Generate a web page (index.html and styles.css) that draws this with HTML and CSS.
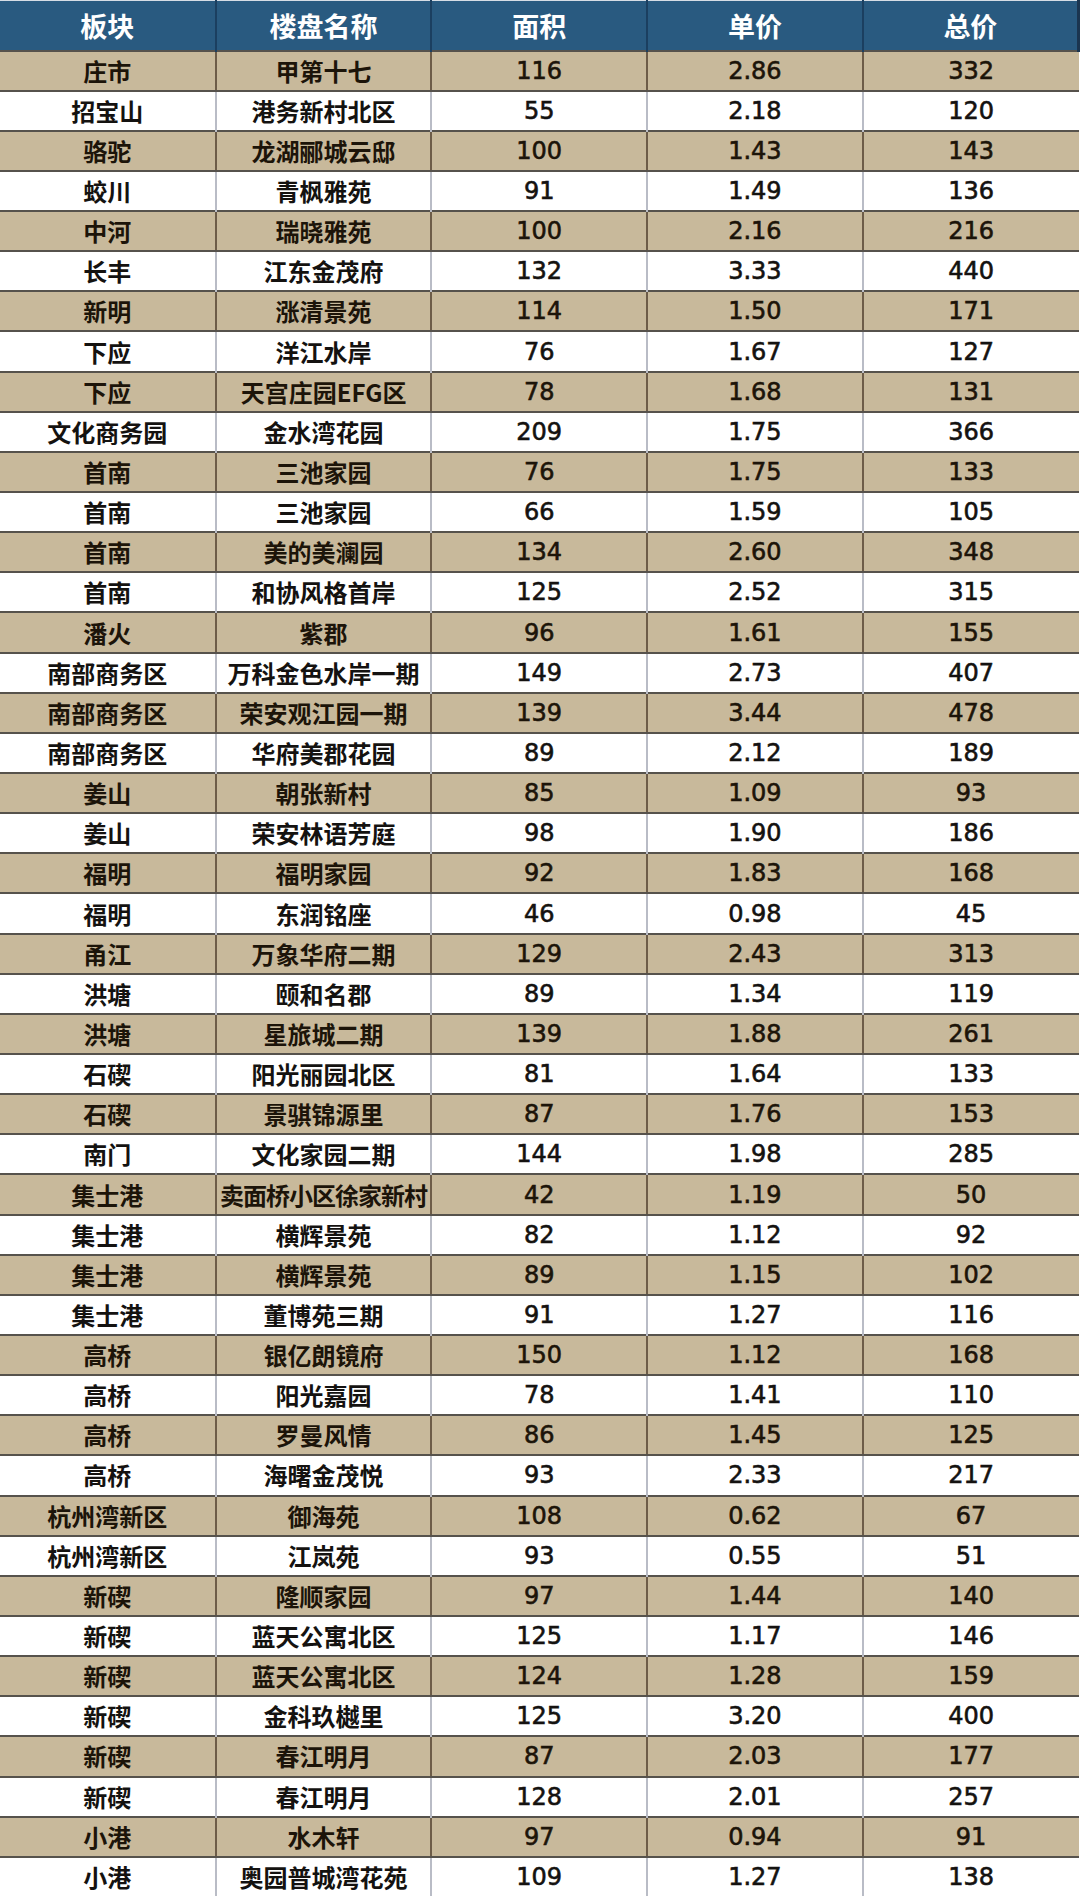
FILE: index.html
```html
<!DOCTYPE html>
<html lang="zh">
<head>
<meta charset="utf-8">
<title>楼盘价格表</title>
<link rel="stylesheet" href="styles.css">
</head>
<body>
<table class="sheet">
<colgroup><col><col><col><col><col></colgroup>
<thead>
<tr class="head"><th>板块</th><th>楼盘名称</th><th>面积</th><th>单价</th><th>总价</th></tr>
</thead>
<tbody>
<tr class="tan"><td>庄市</td><td>甲第十七</td><td class="num">116</td><td class="num">2.86</td><td class="num">332</td></tr>
<tr><td>招宝山</td><td>港务新村北区</td><td class="num">55</td><td class="num">2.18</td><td class="num">120</td></tr>
<tr class="tan"><td>骆驼</td><td>龙湖郦城云邸</td><td class="num">100</td><td class="num">1.43</td><td class="num">143</td></tr>
<tr><td>蛟川</td><td>青枫雅苑</td><td class="num">91</td><td class="num">1.49</td><td class="num">136</td></tr>
<tr class="tan"><td>中河</td><td>瑞晓雅苑</td><td class="num">100</td><td class="num">2.16</td><td class="num">216</td></tr>
<tr><td>长丰</td><td>江东金茂府</td><td class="num">132</td><td class="num">3.33</td><td class="num">440</td></tr>
<tr class="tan"><td>新明</td><td>涨清景苑</td><td class="num">114</td><td class="num">1.50</td><td class="num">171</td></tr>
<tr><td>下应</td><td>洋江水岸</td><td class="num">76</td><td class="num">1.67</td><td class="num">127</td></tr>
<tr class="tan"><td>下应</td><td>天宫庄园EFG区</td><td class="num">78</td><td class="num">1.68</td><td class="num">131</td></tr>
<tr><td>文化商务园</td><td>金水湾花园</td><td class="num">209</td><td class="num">1.75</td><td class="num">366</td></tr>
<tr class="tan"><td>首南</td><td>三池家园</td><td class="num">76</td><td class="num">1.75</td><td class="num">133</td></tr>
<tr><td>首南</td><td>三池家园</td><td class="num">66</td><td class="num">1.59</td><td class="num">105</td></tr>
<tr class="tan"><td>首南</td><td>美的美澜园</td><td class="num">134</td><td class="num">2.60</td><td class="num">348</td></tr>
<tr><td>首南</td><td>和协风格首岸</td><td class="num">125</td><td class="num">2.52</td><td class="num">315</td></tr>
<tr class="tan"><td>潘火</td><td>紫郡</td><td class="num">96</td><td class="num">1.61</td><td class="num">155</td></tr>
<tr><td>南部商务区</td><td>万科金色水岸一期</td><td class="num">149</td><td class="num">2.73</td><td class="num">407</td></tr>
<tr class="tan"><td>南部商务区</td><td>荣安观江园一期</td><td class="num">139</td><td class="num">3.44</td><td class="num">478</td></tr>
<tr><td>南部商务区</td><td>华府美郡花园</td><td class="num">89</td><td class="num">2.12</td><td class="num">189</td></tr>
<tr class="tan"><td>姜山</td><td>朝张新村</td><td class="num">85</td><td class="num">1.09</td><td class="num">93</td></tr>
<tr><td>姜山</td><td>荣安林语芳庭</td><td class="num">98</td><td class="num">1.90</td><td class="num">186</td></tr>
<tr class="tan"><td>福明</td><td>福明家园</td><td class="num">92</td><td class="num">1.83</td><td class="num">168</td></tr>
<tr><td>福明</td><td>东润铭座</td><td class="num">46</td><td class="num">0.98</td><td class="num">45</td></tr>
<tr class="tan"><td>甬江</td><td>万象华府二期</td><td class="num">129</td><td class="num">2.43</td><td class="num">313</td></tr>
<tr><td>洪塘</td><td>颐和名郡</td><td class="num">89</td><td class="num">1.34</td><td class="num">119</td></tr>
<tr class="tan"><td>洪塘</td><td>星旅城二期</td><td class="num">139</td><td class="num">1.88</td><td class="num">261</td></tr>
<tr><td>石碶</td><td>阳光丽园北区</td><td class="num">81</td><td class="num">1.64</td><td class="num">133</td></tr>
<tr class="tan"><td>石碶</td><td>景骐锦源里</td><td class="num">87</td><td class="num">1.76</td><td class="num">153</td></tr>
<tr><td>南门</td><td>文化家园二期</td><td class="num">144</td><td class="num">1.98</td><td class="num">285</td></tr>
<tr class="tan"><td>集士港</td><td class="tight">卖面桥小区徐家新村</td><td class="num">42</td><td class="num">1.19</td><td class="num">50</td></tr>
<tr><td>集士港</td><td>横辉景苑</td><td class="num">82</td><td class="num">1.12</td><td class="num">92</td></tr>
<tr class="tan"><td>集士港</td><td>横辉景苑</td><td class="num">89</td><td class="num">1.15</td><td class="num">102</td></tr>
<tr><td>集士港</td><td>董博苑三期</td><td class="num">91</td><td class="num">1.27</td><td class="num">116</td></tr>
<tr class="tan"><td>高桥</td><td>银亿朗镜府</td><td class="num">150</td><td class="num">1.12</td><td class="num">168</td></tr>
<tr><td>高桥</td><td>阳光嘉园</td><td class="num">78</td><td class="num">1.41</td><td class="num">110</td></tr>
<tr class="tan"><td>高桥</td><td>罗曼风情</td><td class="num">86</td><td class="num">1.45</td><td class="num">125</td></tr>
<tr><td>高桥</td><td>海曙金茂悦</td><td class="num">93</td><td class="num">2.33</td><td class="num">217</td></tr>
<tr class="tan"><td>杭州湾新区</td><td>御海苑</td><td class="num">108</td><td class="num">0.62</td><td class="num">67</td></tr>
<tr><td>杭州湾新区</td><td>江岚苑</td><td class="num">93</td><td class="num">0.55</td><td class="num">51</td></tr>
<tr class="tan"><td>新碶</td><td>隆顺家园</td><td class="num">97</td><td class="num">1.44</td><td class="num">140</td></tr>
<tr><td>新碶</td><td>蓝天公寓北区</td><td class="num">125</td><td class="num">1.17</td><td class="num">146</td></tr>
<tr class="tan"><td>新碶</td><td>蓝天公寓北区</td><td class="num">124</td><td class="num">1.28</td><td class="num">159</td></tr>
<tr><td>新碶</td><td>金科玖樾里</td><td class="num">125</td><td class="num">3.20</td><td class="num">400</td></tr>
<tr class="tan"><td>新碶</td><td>春江明月</td><td class="num">87</td><td class="num">2.03</td><td class="num">177</td></tr>
<tr><td>新碶</td><td>春江明月</td><td class="num">128</td><td class="num">2.01</td><td class="num">257</td></tr>
<tr class="tan"><td>小港</td><td>水木轩</td><td class="num">97</td><td class="num">0.94</td><td class="num">91</td></tr>
<tr><td>小港</td><td>奥园普城湾花苑</td><td class="num">109</td><td class="num">1.27</td><td class="num">138</td></tr>
</tbody>
</table>
</body>
</html>
```
FILE: styles.css
```css
html, body {
  margin: 0;
  padding: 0;
  background: #ffffff;
}

.sheet {
  width: 1080px;
  table-layout: fixed;
  border-collapse: collapse;
  border-spacing: 0;
  font-family: "Noto Sans CJK SC", "DejaVu Sans", sans-serif;
  font-weight: 700;
  color: #141210;
}

.sheet col {
  width: 20%;
}

.sheet th,
.sheet td {
  padding: 0;
  text-align: center;
  vertical-align: middle;
  white-space: nowrap;
  overflow: hidden;
  line-height: 1;
}

.head th {
  height: 50px;
  box-sizing: border-box;
  background: #295a80;
  color: #ffffff;
  font-size: 27px;
  border-top: 1px solid #d6dde5;
  border-left: 2px solid #1b3f60;
}

.head th:first-child {
  border-left: none;
}

.head th:last-child {
  border-right: 3px solid #1b3550;
}

.sheet td {
  height: 40.15px;
  box-sizing: border-box;
  font-size: 24px;
  border-left: 2px solid #b9bcc6;
}

.sheet td:first-child {
  border-left: none;
}

.sheet td.num {
  font-family: "DejaVu Sans", sans-serif;
  font-size: 24px;
  font-weight: 400;
  -webkit-text-stroke: 0.6px currentColor;
}

.sheet td.tight {
  letter-spacing: -1px;
}

.tan td {
  background: #c8b99b;
  color: #1c1409;
  border-top: 2px solid #56524c;
  border-bottom: 2px solid #56524c;
  border-left-color: #6d5c48;
}

.tan td:first-child {
  border-left: none;
}
```
